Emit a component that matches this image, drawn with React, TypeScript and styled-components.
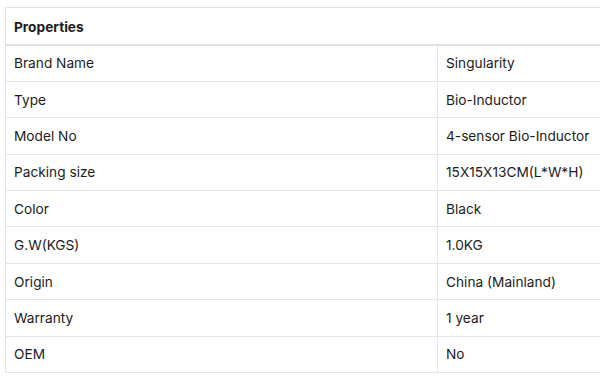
import React from "react";
import styled, { createGlobalStyle } from "styled-components";

const Global = createGlobalStyle`
  html, body { margin: 0; padding: 0; background: #fff; }
  body { font-family: Inter, "Noto Sans", sans-serif; color: #1c1c1c; overflow: hidden; }
`;

const Wrap = styled.div`
  padding: 7px 0 0 5px;
  width: 595px;
  overflow: hidden;
`;

const Table = styled.table`
  border-collapse: collapse;
  width: 600px;
  table-layout: fixed;
  font-size: 13.7px;
`;

const HeadCell = styled.th`
  text-align: left;
  font-weight: 700;
  height: 35px;
  padding: 1px 8px 0;
  border: 1px solid #e3e3e3;
  border-bottom: 2px solid #e0e0e0;
  vertical-align: middle;
`;

const Row = styled.tr`
  height: 36.4px;
`;

const Cell = styled.td`
  padding: 0 8px;
  border: 1px solid #e6e6e6;
  vertical-align: middle;
`;

const rows: [string, string][] = [
  ["Brand Name", "Singularity"],
  ["Type", "Bio-Inductor"],
  ["Model No", "4-sensor Bio-Inductor"],
  ["Packing size", "15X15X13CM(L*W*H)"],
  ["Color", "Black"],
  ["G.W(KGS)", "1.0KG"],
  ["Origin", "China (Mainland)"],
  ["Warranty", "1 year"],
  ["OEM", "No"],
];

export default function App() {
  return (
    <>
      <Global />
      <Wrap>
        <Table>
          <colgroup>
            <col style={{ width: 432 }} />
            <col />
          </colgroup>
          <thead>
            <tr>
              <HeadCell colSpan={2}>Properties</HeadCell>
            </tr>
          </thead>
          <tbody>
            {rows.map(([k, v]) => (
              <Row key={k}>
                <Cell>{k}</Cell>
                <Cell>{v}</Cell>
              </Row>
            ))}
          </tbody>
        </Table>
      </Wrap>
    </>
  );
}
